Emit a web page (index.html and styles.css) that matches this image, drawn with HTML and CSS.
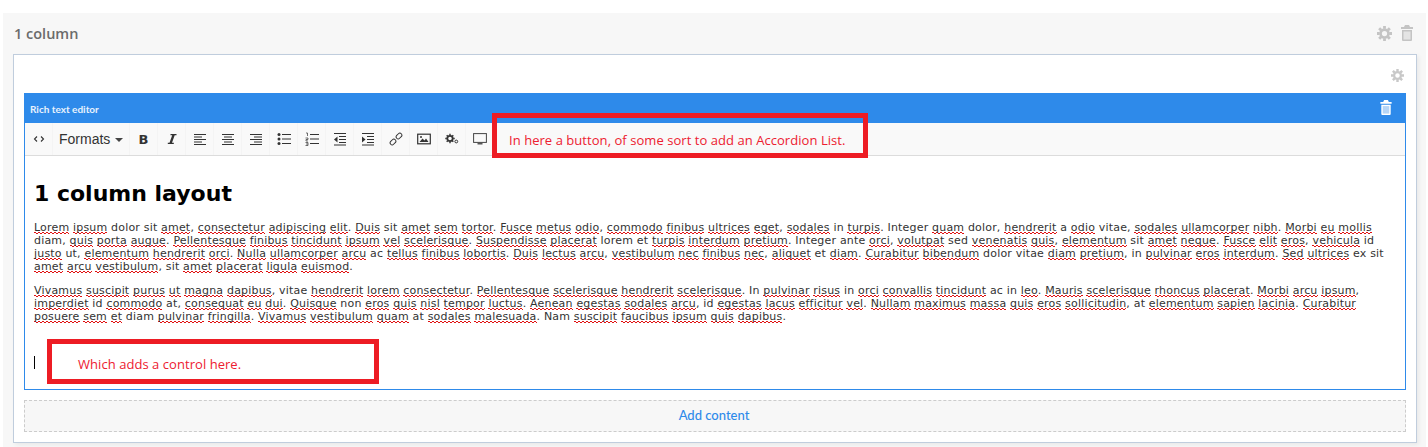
FILE: index.html
```html
<!DOCTYPE html>
<html lang="en">
<head>
    <meta charset="UTF-8">
    <title>1 column</title>
    <link rel="stylesheet" href="styles.css">
</head>
<body>

<svg class="defs" width="0" height="0">
    <symbol id="gear" viewBox="0 0 16 16">
        <circle cx="8" cy="8" r="4.2" fill="none" stroke="currentColor" stroke-width="2.8"/>
        <g stroke="currentColor" stroke-width="3">
            <path d="M8 0v3M8 13v3M0 8h3M13 8h3M2.3 2.3l2.2 2.2M11.5 11.5l2.2 2.2M2.3 13.7l2.2-2.2M11.5 4.500l2.200-2.200"/>
        </g>
    </symbol>
    <symbol id="trash" viewBox="0 0 12 16">
        <path fill="currentColor" d="M4 0h4l1 2h3v2H0V2h3zM1 5h10v10a1 1 0 0 1-1 1H2a1 1 0 0 1-1-1z"/>
        <rect class="trash-in" x="2.500" y="6.500" width="7" height="8"/>
    </symbol>
</svg>

<div class="panel">
    <div class="panel-head">
        <span class="panel-title">1 column</span>
        <div class="panel-tools">
            <svg class="ic-gear"><use href="#gear"/></svg>
            <svg class="ic-trash"><use href="#trash"/></svg>
        </div>
    </div>

    <div class="box">
        <div class="box-tools">
            <svg class="ic-gear-small"><use href="#gear"/></svg>
        </div>

        <div class="editor">
            <div class="editor-head">
                <span>Rich text editor</span>
                <svg class="ic-trash-white"><use href="#trash"/></svg>
            </div>

            <div class="toolbar">
                <div class="tb-btn"><svg viewBox="0 0 14 14"><path d="M5 4.500L2.500 7 5 9.500M9 4.500L11.500 7 9 9.500" fill="none" stroke="#333" stroke-width="1.100"/></svg></div>
                <div class="tb-btn tb-formats">Formats<i class="caret"></i></div>
                <div class="tb-btn tb-b">B</div>
                <div class="tb-btn"><svg viewBox="0 0 14 14"><path d="M5.500 2h6v1.200H9.700L7 10.800h1.800V12h-6v-1.200h1.700l2.700-7.600H5.500z" fill="#333"/></svg></div>
                <div class="tb-btn"><svg viewBox="0 0 14 14"><path d="M1 2.500h12M1 5h8M1 7.500h12M1 10h8M1 12.500h12" stroke="#333" stroke-width="1.100"/></svg></div>
                <div class="tb-btn"><svg viewBox="0 0 14 14"><path d="M1 2.500h12M3 5h8M1 7.500h12M3 10h8M1 12.500h12" stroke="#333" stroke-width="1.100"/></svg></div>
                <div class="tb-btn"><svg viewBox="0 0 14 14"><path d="M1 2.500h12M5 5h8M1 7.500h12M5 10h8M1 12.500h12" stroke="#333" stroke-width="1.100"/></svg></div>
                <div class="tb-btn"><svg viewBox="0 0 14 14"><path d="M5 2.500h9M5 7h9M5 11.500h9" stroke="#333" stroke-width="1.200"/><circle cx="2" cy="2.500" r="1.500" fill="#333"/><circle cx="2" cy="7" r="1.500" fill="#333"/><circle cx="2" cy="11.500" r="1.500" fill="#333"/></svg></div>
                <div class="tb-btn"><svg viewBox="0 0 14 14"><path d="M5 2.500h9M5 7h9M5 11.500h9" stroke="#333" stroke-width="1.200"/><path d="M1 1h1.500v3M.5 6h2.500v1.500H1V9h2M.5 10.500H3v3H.5M1 12h2" fill="none" stroke="#333" stroke-width=".7"/></svg></div>
                <div class="tb-btn"><svg viewBox="0 0 14 14"><path d="M1 1.500h12M6 4.500h7M6 7.500h7M6 10.500h7M1 13h12" stroke="#333" stroke-width="1.200"/><path d="M4.500 4.500v6L1 7.500z" fill="#333"/></svg></div>
                <div class="tb-btn"><svg viewBox="0 0 14 14"><path d="M1 1.500h12M6 4.500h7M6 7.500h7M6 10.500h7M1 13h12" stroke="#333" stroke-width="1.200"/><path d="M1 4.500v6l3.500-3z" fill="#333"/></svg></div>
                <div class="tb-btn"><svg viewBox="0 0 14 14"><g fill="none" stroke="#333" stroke-width="1"><rect x="-3.200" y="-2" width="6.400" height="4" rx="2" transform="translate(4 10) rotate(-45)"/><rect x="-3.200" y="-2" width="6.400" height="4" rx="2" transform="translate(10 4) rotate(-45)"/></g></svg></div>
                <div class="tb-btn"><svg viewBox="0 0 14 14"><rect x=".7" y="2.200" width="12.600" height="9.600" fill="none" stroke="#333" stroke-width="1.200"/><path d="M2.500 10l3-3.500 2 2 1.500-2 2.500 3.500z" fill="#333"/><circle cx="4" cy="5" r="1" fill="#333"/></svg></div>
                <div class="tb-btn"><svg viewBox="0 0 14 14"><circle cx="5" cy="6.500" r="2.700" fill="none" stroke="#333" stroke-width="1.800"/><path d="M5 1.800v1.500M5 9.700v1.500M.3 6.500h1.500M8.200 6.500h1.500M1.700 3.200l1 1M7.300 8.800l1 1M1.700 9.800l1-1M7.300 4.200l1-1" stroke="#333" stroke-width="1.400"/><circle cx="11.300" cy="9.500" r="1.400" fill="none" stroke="#333" stroke-width="1"/></svg></div>
                <div class="tb-btn"><svg viewBox="0 0 14 14"><rect x=".6" y="1.600" width="12.800" height="8.800" fill="none" stroke="#444" stroke-width="1"/><path d="M4.500 12.500h5v-2h-5z" fill="#555"/></svg></div>
            </div>

            <div class="editor-body">
                <h1>1 column layout</h1>
                <p><u>Lorem</u> <u>ipsum</u> dolor sit <u>amet</u>, <u>consectetur</u> <u>adipiscing</u> <u>elit</u>. <u>Duis</u> sit <u>amet</u> <u>sem</u> <u>tortor</u>. <u>Fusce</u> <u>metus</u> <u>odio</u>, <u>commodo</u> <u>finibus</u> <u>ultrices</u> <u>eget</u>, <u>sodales</u> in <u>turpis</u>. Integer <u>quam</u> dolor, <u>hendrerit</u> a <u>odio</u> vitae, <u>sodales</u> <u>ullamcorper</u> <u>nibh</u>. <u>Morbi</u> <u>eu</u> <u>mollis</u> diam, <u>quis</u> <u>porta</u> <u>augue</u>. <u>Pellentesque</u> <u>finibus</u> <u>tincidunt</u> <u>ipsum</u> <u>vel</u> <u>scelerisque</u>. <u>Suspendisse</u> <u>placerat</u> lorem et <u>turpis</u> <u>interdum</u> <u>pretium</u>. Integer ante <u>orci</u>, <u>volutpat</u> sed <u>venenatis</u> <u>quis</u>, <u>elementum</u> sit <u>amet</u> <u>neque</u>. <u>Fusce</u> <u>elit</u> <u>eros</u>, <u>vehicula</u> id <u>justo</u> ut, <u>elementum</u> <u>hendrerit</u> <u>orci</u>. <u>Nulla</u> <u>ullamcorper</u> <u>arcu</u> ac <u>tellus</u> <u>finibus</u> <u>lobortis</u>. <u>Duis</u> <u>lectus</u> <u>arcu</u>, <u>vestibulum</u> <u>nec</u> <u>finibus</u> <u>nec</u>, <u>aliquet</u> et <u>diam</u>. <u>Curabitur</u> <u>bibendum</u> dolor vitae <u>diam</u> <u>pretium</u>, in <u>pulvinar</u> <u>eros</u> <u>interdum</u>. <u>Sed</u> <u>ultrices</u> ex sit <u>amet</u> <u>arcu</u> <u>vestibulum</u>, sit <u>amet</u> <u>placerat</u> <u>ligula</u> <u>euismod</u>.</p>
                <p><u>Vivamus</u> <u>suscipit</u> <u>purus</u> <u>ut</u> <u>magna</u> <u>dapibus</u>, vitae <u>hendrerit</u> <u>lorem</u> <u>consectetur</u>. <u>Pellentesque</u> <u>scelerisque</u> <u>hendrerit</u> <u>scelerisque</u>. In <u>pulvinar</u> <u>risus</u> in <u>orci</u> <u>convallis</u> <u>tincidunt</u> ac in <u>leo</u>. <u>Mauris</u> <u>scelerisque</u> <u>rhoncus</u> <u>placerat</u>. <u>Morbi</u> <u>arcu</u> <u>ipsum</u>, <u>imperdiet</u> id <u>commodo</u> at, <u>consequat</u> <u>eu</u> <u>dui</u>. <u>Quisque</u> non <u>eros</u> <u>quis</u> <u>nisl</u> <u>tempor</u> <u>luctus</u>. <u>Aenean</u> <u>egestas</u> <u>sodales</u> <u>arcu</u>, id <u>egestas</u> <u>lacus</u> <u>efficitur</u> <u>vel</u>. <u>Nullam</u> <u>maximus</u> <u>massa</u> <u>quis</u> <u>eros</u> <u>sollicitudin</u>, at <u>elementum</u> <u>sapien</u> <u>lacinia</u>. <u>Curabitur</u> <u>posuere</u> <u>sem</u> <u>et</u> diam <u>pulvinar</u> <u>fringilla</u>. <u>Vivamus</u> <u>vestibulum</u> <u>quam</u> at <u>sodales</u> <u>malesuada</u>. Nam <u>suscipit</u> <u>faucibus</u> <u>ipsum</u> <u>quis</u> <u>dapibus</u>.</p>
                <div class="cursor"></div>
            </div>
        </div>

        <div class="add-content">Add content</div>
    </div>
</div>

<div class="note note-toolbar">In here a button, of some sort to add an Accordion List.</div>
<div class="note note-body">Which adds a control here.</div>

</body>
</html>
```

FILE: styles.css
```css
body {
    margin: 0;
    background: #fff;
    height: 447px;
    overflow: hidden;
    position: relative;
    font-family: Lato, sans-serif;
}

.defs {
    position: absolute;
}

.panel {
    margin: 13px 2px 0 3px;
    padding: 0 10px;
    background: #f7f7f7;
    height: 434px;
}

.panel-head {
    height: 41px;
    padding-bottom: 1px;
    box-sizing: border-box;
    display: flex;
    align-items: center;
    justify-content: space-between;
}

.panel-title {
    font-family: "Open Sans", sans-serif;
    font-size: 14.5px;
    font-weight: 600;
    color: #6b6b6b;
    padding-left: 1px;
}

.panel-tools {
    display: flex;
    align-items: center;
    gap: 9px;
    color: #c4c4c4;
    margin-right: 3px;
}

.ic-gear {
    width: 15px;
    height: 15px;
}

.ic-trash {
    width: 12px;
    height: 16px;
    --trash-in: #e4e4e4;
}

.trash-in {
    fill: var(--trash-in);
}

.box {
    height: 387px;
    margin-right: -1px;
    background: #fff;
    border: 1px solid #c0cddd;
    box-shadow: 2px 2px 4px rgba(0, 0, 0, 0.06);
    padding: 0 10px;
}

.box-tools {
    height: 38px;
    display: flex;
    align-items: flex-end;
    justify-content: flex-end;
    color: #c8c8c8;
}

.ic-gear-small {
    width: 13px;
    height: 13px;
    margin: 0 2px 11px 0;
}

.editor {
    border: 1px solid #2e8aea;
    border-top: 0;
    background: #fff;
}

.editor-head {
    height: 30px;
    margin: 0 -1px;
    padding: 1px 14px 0 6px;
    box-sizing: border-box;
    background: #2e8aea;
    color: #e8f2fd;
    font-size: 10px;
    font-weight: 700;
    display: flex;
    align-items: center;
    justify-content: space-between;
}

.ic-trash-white {
    width: 12px;
    height: 15px;
    color: #fff;
    margin-top: -3px;
    --trash-in: #b5d5f7;
}

.toolbar {
    height: 33px;
    display: flex;
    box-sizing: border-box;
    background: #f9f9f9;
    border-bottom: 1px solid #dcdcdc;
}

.tb-btn {
    width: 28px;
    flex: none;
    display: flex;
    align-items: center;
    justify-content: center;
    border-right: 1px solid #f4f4f4;
    box-sizing: border-box;
    font-family: "Liberation Sans", sans-serif;
    color: #333;
}

.tb-btn svg {
    width: 14px;
    height: 14px;
}

.tb-formats {
    width: 77px;
    font-size: 14px;
    justify-content: flex-start;
    padding-left: 6px;
}

.tb-b {
    font-family: "DejaVu Sans", sans-serif;
    font-size: 13px;
    font-weight: 700;
}

.caret {
    width: 0;
    height: 0;
    margin-left: 5px;
    margin-top: 2px;
    border-top: 4px solid #444;
    border-left: 4px solid transparent;
    border-right: 4px solid transparent;
}

.editor-body {
    height: 233px;
    padding: 0 9px;
    font-family: "DejaVu Sans", sans-serif;
    font-size: 11px;
    line-height: 13px;
    letter-spacing: 0.185px;
    color: #333;
}

.editor-body h1 {
    margin: 0;
    padding-top: 25px;
    font-size: 22px;
    line-height: 26px;
    letter-spacing: 0;
    color: #000;
}

.editor-body p {
    margin: 0 0 11px;
}

.editor-body h1 + p {
    margin-top: 14px;
}

/* spell check squiggle, two offset rows of dashes */
.editor-body u {
    text-decoration: none;
    background-image:
        linear-gradient(90deg, #e01010 50%, transparent 50%),
        linear-gradient(90deg, transparent 50%, #e01010 50%);
    background-size: 4px 1px;
    background-repeat: repeat-x;
    background-position: 0 11px, 0 12px;
}

.cursor {
    width: 1px;
    height: 13px;
    margin-top: 33px;
    background: #000;
}

.add-content {
    height: 32px;
    margin-top: 10px;
    padding: 0 2px 2px 0;
    box-sizing: border-box;
    border: 1px dashed #ccc;
    background: #f7f7f7;
    color: #2e8aea;
    font-size: 13px;
    font-weight: 500;
    display: flex;
    align-items: center;
    justify-content: center;
}

/* red annotations drawn on top of the screenshot */
.note {
    position: absolute;
    box-sizing: border-box;
    border: 5px solid #ed1c24;
    font-family: "Open Sans", sans-serif;
    font-size: 13px;
    letter-spacing: 0.05px;
    color: #ed2030;
    display: flex;
    align-items: center;
}

.note-toolbar {
    left: 492px;
    top: 113px;
    width: 376px;
    height: 45px;
    padding: 9px 0 0 12px;
}

.note-body {
    left: 47px;
    top: 339px;
    width: 332px;
    height: 45px;
    padding: 5px 0 0 26px;
}
```
